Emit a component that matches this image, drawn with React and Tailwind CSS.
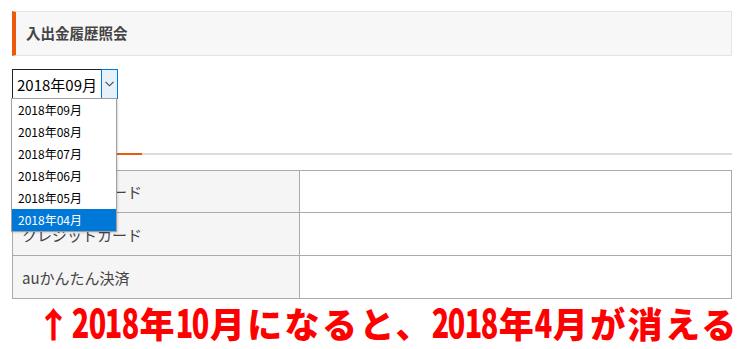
import React from "react";

const months = ["2018年09月", "2018年08月", "2018年07月", "2018年06月", "2018年05月", "2018年04月"];

function D({ s }) {
  return s.split("").map((c, i) => (
    <span key={i} className="inline-flex w-[16.5px] justify-center">
      <span className="inline-block scale-x-[0.72] text-[40px]">{c}</span>
    </span>
  ));
}

export default function App() {
  return (
    <div className="relative w-[738px] h-[349px] overflow-hidden bg-white text-[#333] font-['Noto_Sans_CJK_JP','Noto_Sans',sans-serif]">
      <div className="pl-3 pr-[6px] pt-[11px]">
        <div className="h-[45px] flex items-center bg-[#f7f7f7] border border-[#e3e3e3] border-l-4 border-l-[#ec5a0c] pl-[10px]">
          <span className="text-[14.5px] font-bold text-[#444] leading-none">入出金履歴照会</span>
        </div>

        <div className="mt-[13px] flex w-[106px] h-[30px]">
          <div className="w-[90px] h-full border border-[#222] border-r-0 flex items-center pl-[4px] text-[15px] text-black leading-none">
            2018年09月
          </div>
          <div className="w-[17px] h-full border border-[#0078d7] bg-[#e5f1fb] flex items-center justify-center">
            <svg width="9" height="6" viewBox="0 0 9 6" fill="none">
              <path d="M0.5 0.8 L4.5 4.8 L8.5 0.8" stroke="#444" strokeWidth="1.1" />
            </svg>
          </div>
        </div>

        <div className="mt-[54px] flex h-[2px]">
          <div className="w-[130px] bg-[#ec5a0c]" />
          <div className="flex-1 bg-[#dcdcdc]" />
        </div>

        <table className="mt-[15px] w-full border-collapse text-[15px]">
          <tbody>
            {["クレジットカード", "クレジットカード", "auかんたん決済"].map((t, i) => (
              <tr key={i} className={i === 0 ? "h-[42px]" : "h-[43px]"}>
                <td className="w-[287px] border border-[#aaaaaa] bg-[#f5f5f5] pl-[9px] text-[#444] leading-none">{t}</td>
                <td className="border border-[#aaaaaa] bg-white" />
              </tr>
            ))}
          </tbody>
        </table>

        <div className="mt-[2px] pl-[24px] whitespace-nowrap text-[35px] tracking-[2.4px] leading-[40px] font-black text-[#ff0000] font-['Noto_Sans_CJK_JP',sans-serif]">
          ↑<D s="2018" />年<D s="10" />月になると、<D s="2018" />年<D s="4" />月が消える
        </div>
      </div>

      <div className="absolute left-[11px] top-[98px] w-[106px] bg-white border border-[#a0a0a0] shadow-[1px_1px_2px_rgba(0,0,0,0.15)]">
        {months.map((m, i) => (
          <div
            key={m}
            className={`h-[22px] flex items-center pl-[6px] text-[12px] leading-none ${i === 5 ? "bg-[#0078d7] text-white" : "text-black"}`}
          >
            {m}
          </div>
        ))}
      </div>
    </div>
  );
}
